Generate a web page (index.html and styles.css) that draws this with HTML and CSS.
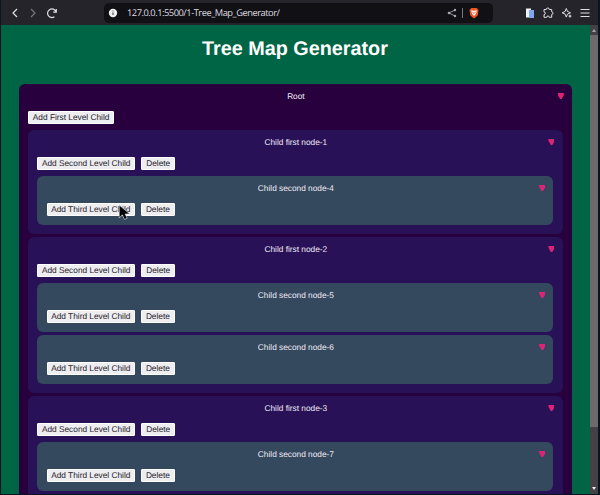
FILE: index.html
```
<!DOCTYPE html>
<html lang="en">
<head>
<meta charset="utf-8">
<title>Tree Map Generator</title>
<link rel="stylesheet" href="styles.css">
</head>
<body>
<div class="window">
  <header class="toolbar">
    <nav class="nav">
      <svg width="10" height="12" viewBox="0 0 10 12"><path d="M7 2 3 6l4 4" stroke="#e0dfe3" stroke-width="1.2"/></svg>
      <svg width="10" height="12" viewBox="0 0 10 12"><path d="m3 2 4 4-4 4" stroke="#77757d" stroke-width="1.2"/></svg>
      <svg width="12" height="12" viewBox="0 0 12 12"><path d="M8.4 9.7A4.3 4.3 0 1 1 9.8 4.5M10.3 2v3.2H7.2" stroke="#e0dfe3" stroke-width="1.2"/></svg>
    </nav>
    <div class="address">
      <svg width="10" height="10" viewBox="0 0 10 10"><circle cx="5" cy="5" r="4.2" fill="#eeeef1"/><path d="M5 4.5V7M5 2.7v.8" stroke="#34323a" stroke-width="1"/></svg>
      <span class="url">127.0.0.1:5500/1-Tree_Map_Generator/</span>
      <svg class="share" width="10" height="10" viewBox="0 0 10 10"><path d="M8 2 2 5l6 3" stroke="#aaa8af" stroke-width=".9"/><circle cx="8" cy="2" r="1.2" fill="#aaa8af"/><circle cx="2" cy="5" r="1.3" fill="#aaa8af"/><circle cx="8" cy="8" r="1.2" fill="#aaa8af"/></svg>
      <span class="divider"></span>
      <svg width="10" height="12" viewBox="0 0 10 12"><path d="M2.3 1h5.4l1.8 2-.8 5.4L5 11.4 1.3 8.4.5 3z" fill="#f05524"/><path d="m2.2 3.2 2.8.5 2.8-.5-.8 3.5L5 9 3 6.7z" fill="#fff"/><path d="M3.5 4.8 5 6.8l1.5-2" stroke="#f05524" stroke-width=".8"/></svg>
    </div>
    <div class="tools">
      <svg width="10" height="12" viewBox="0 0 10 12"><path d="M1 1.5h5v9H1z" fill="#f1f3fa"/><path d="M4 3h5v8H4z" fill="#7fa6ee"/></svg>
      <svg width="12" height="12" viewBox="0 0 12 12"><path d="M2 2.5h2.3a1.5 1.5 0 0 1 3 0h2.4v2.4a1.3 1.3 0 0 1 0 2.6v2.8H7.3a1.3 1.3 0 0 0-2.6 0H2V7.6a1.3 1.3 0 0 0 0-2.7z" stroke="#e0dfe3"/></svg>
      <svg width="12" height="12" viewBox="0 0 12 12"><path d="m5.3 1.5 1.2 3 3 1.3-3 1.3-1.2 3-1.2-3-3-1.3 3-1.3z" stroke="#e0dfe3"/><path d="m9 7 .6 1.5 1.4.6-1.4.6L9 11.2l-.6-1.5L7 9.1l1.4-.6z" fill="#e0dfe3"/></svg>
      <svg width="10" height="12" viewBox="0 0 10 12"><path d="M.5 2.5h9M.5 6h9M.5 9.5h9" stroke="#e0dfe3"/></svg>
    </div>
  </header>
  <div class="viewport">
    <main class="page">
      <h1>Tree Map Generator</h1>
      <section class="node root">
        <div class="head">Root<i class="arrow"></i></div>
        <div class="actions"><button class="b1">Add First Level Child</button></div>
        <div class="children">
          <section class="node first">
            <div class="head">Child first node-1<i class="arrow"></i></div>
            <div class="actions"><button class="b2">Add Second Level Child</button><button class="del">Delete</button></div>
            <div class="children">
              <section class="node second">
                <div class="head">Child second node-4<i class="arrow"></i></div>
                <div class="actions"><button class="b3">Add Third Level Child</button><button class="del">Delete</button></div>
              </section>
            </div>
          </section>
          <section class="node first">
            <div class="head">Child first node-2<i class="arrow"></i></div>
            <div class="actions"><button class="b2">Add Second Level Child</button><button class="del">Delete</button></div>
            <div class="children">
              <section class="node second">
                <div class="head">Child second node-5<i class="arrow"></i></div>
                <div class="actions"><button class="b3">Add Third Level Child</button><button class="del">Delete</button></div>
              </section>
              <section class="node second">
                <div class="head">Child second node-6<i class="arrow"></i></div>
                <div class="actions"><button class="b3">Add Third Level Child</button><button class="del">Delete</button></div>
              </section>
            </div>
          </section>
          <section class="node first">
            <div class="head">Child first node-3<i class="arrow"></i></div>
            <div class="actions"><button class="b2">Add Second Level Child</button><button class="del">Delete</button></div>
            <div class="children">
              <section class="node second">
                <div class="head">Child second node-7<i class="arrow"></i></div>
                <div class="actions"><button class="b3">Add Third Level Child</button><button class="del">Delete</button></div>
              </section>
            </div>
          </section>
        </div>
      </section>
    </main>
    <div class="scrollbar"><i class="up"></i><div class="thumb"></div><i class="down"></i></div>
  </div>
</div>
<svg class="cursor" width="13" height="17" viewBox="0 0 12 16"><path d="M1 1v12l3-2.7L6 14.5l2.5-1.1-1.8-4H11z" fill="#050505" stroke="#fff" stroke-width=".5"/></svg>
</body>
</html>
```
FILE: styles.css
```
* { box-sizing: border-box; }
body {
  margin: 0;
  height: 495px;
  overflow: hidden;
  background: #07161e;
  font-family: "Liberation Sans", Arial, sans-serif;
  text-rendering: geometricPrecision;
}
svg { display: block; flex: none; fill: none; }
.window {
  display: flex;
  flex-direction: column;
  height: 494px;
  margin: 0 2px 0 1px;
}
.toolbar {
  display: flex;
  align-items: center;
  flex: none;
  height: 25px;
  padding: 0 8px 0 9px;
  background: #26242b;
}
.nav { display: flex; align-items: center; gap: 8px; width: 94px; }
.address {
  display: flex;
  align-items: center;
  width: 389px;
  height: 20px;
  padding: 0 14px 0 4px;
  border-radius: 5px;
  background: #111015;
}
.url {
  margin-left: 9px;
  color: #dddce1;
  font: 9.3px/12px "Open Sans", "Noto Sans", sans-serif;
  letter-spacing: -0.47px;
  white-space: nowrap;
}
.share { margin-left: auto; }
.divider { width: 1px; height: 10px; margin: 0 6px 0 5px; background: #77757d; }
.tools { display: flex; align-items: center; gap: 7px; margin-left: auto; }
.viewport { display: flex; flex: 1; min-height: 0; }
.page {
  flex: 1;
  padding: 0 18px;
  overflow: hidden;
  background: #006545;
}
h1 {
  margin: 0;
  height: 59px;
  padding-top: 13px;
  color: #fff;
  font-size: 19.8px;
  line-height: 23px;
  text-align: center;
  text-indent: -1px;
}
.node { border-radius: 6px; padding: 0 9.3px 9px 9.1px; color: #eeeaf3; }
.root { background: #27003d; }
.first { background: #291157; }
.second { padding-left: 9.5px; background: #34485e; }
.head {
  display: flex;
  align-items: center;
  justify-content: center;
  position: relative;
  height: 26.5px;
  padding: 0 0 2px 1px;
  font-size: 8.3px;
  line-height: 12px;
}
.arrow {
  position: absolute;
  top: 9px;
  right: -1px;
  width: 6px;
  height: 6px;
  background: #dc2476;
  clip-path: polygon(0 0, 100% 0, 100% 40%, 65% 100%, 40% 100%, 0 30%);
}
.actions { display: flex; gap: 6px; height: 13px; }
button {
  height: 13px;
  padding: 0;
  border: 1px solid #fff;
  border-radius: 1px;
  background: #eeedf0;
  color: #25222a;
  font: 8.3px/11px "Liberation Sans", Arial, sans-serif;
  text-rendering: inherit;
  white-space: nowrap;
}
.b1 { width: 86px; }
.b2 { width: 98px; }
.b3 { width: 88.2px; }
.del { width: 34px; }
.children {
  display: flex;
  flex-direction: column;
  gap: 3.5px;
  padding-top: 6.5px;
}
.scrollbar {
  display: flex;
  flex-direction: column;
  align-items: center;
  flex: none;
  width: 8px;
  padding: 4px 0;
  background: #434146;
}
.up, .down { width: 4px; height: 3px; background: #a6a4a9; clip-path: polygon(50% 0, 100% 100%, 0 100%); }
.down { margin-top: auto; background: #eeedf0; clip-path: polygon(0 0, 100% 0, 50% 100%); }
.thumb { width: 8px; height: 392px; margin-top: 3px; background: #6d6a6c; }
.cursor { position: absolute; left: 118px; top: 204px; }
```
